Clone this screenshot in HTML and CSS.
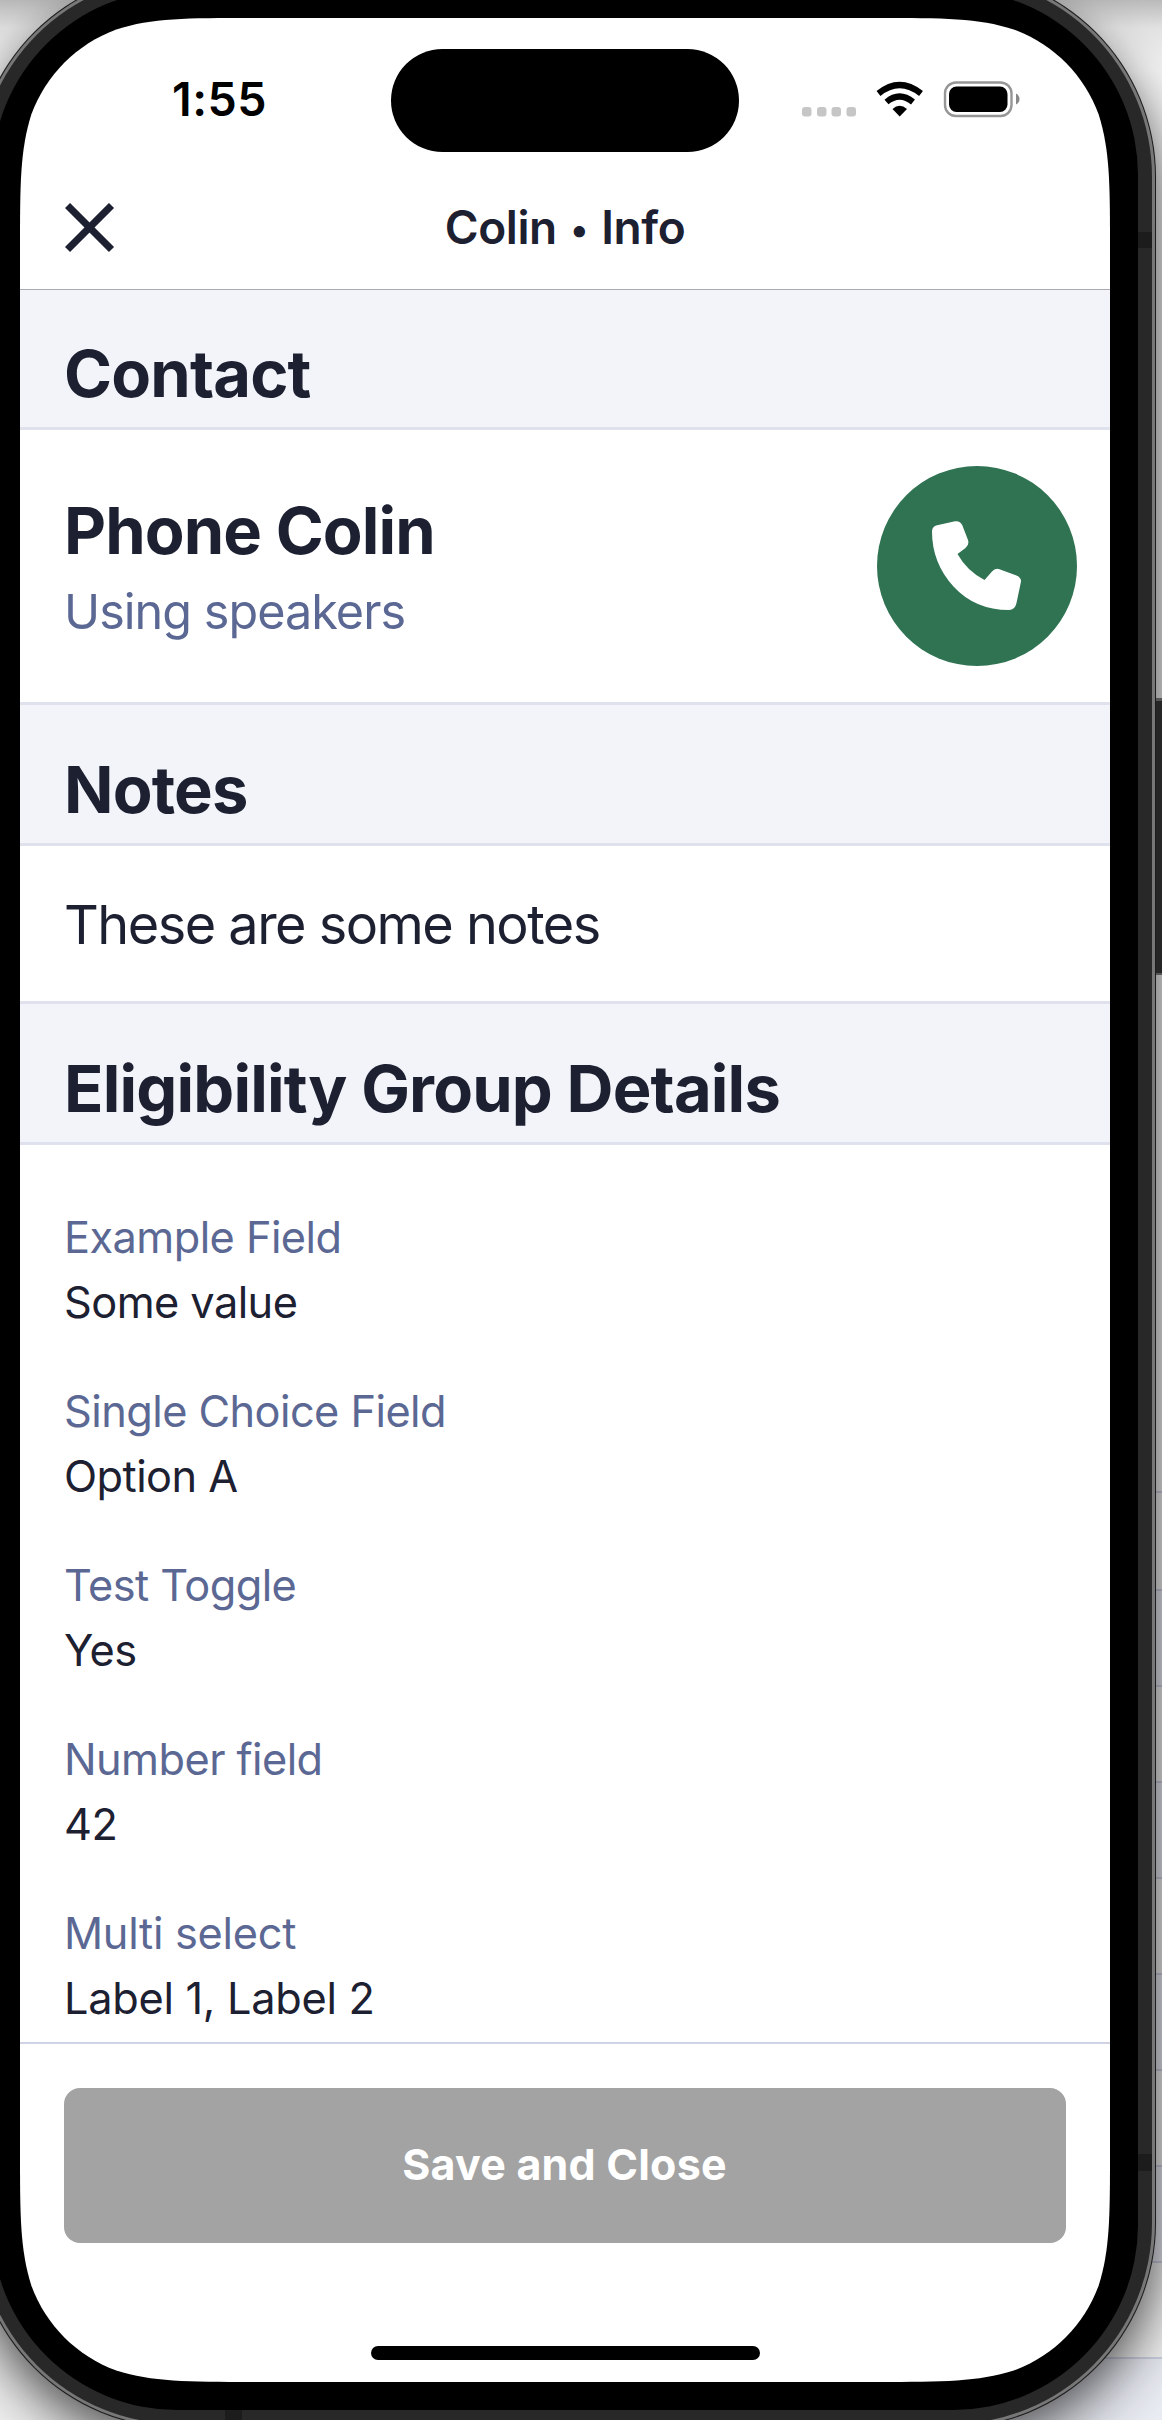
FILE: index.html
```html
<!DOCTYPE html>
<html lang="en">
<head>
<meta charset="utf-8">
<title>Colin • Info</title>
<link rel="stylesheet" href="styles.css">
</head>
<body>
<svg class="device" width="1162" height="2420" viewBox="0 0 1162 2420" aria-hidden="true">
  <defs>
    <linearGradient id="topShade" x1="0" y1="0" x2="0" y2="1">
      <stop offset="0" stop-color="#000" stop-opacity=".24"/>
      <stop offset=".4" stop-color="#000" stop-opacity=".07"/>
      <stop offset="1" stop-color="#000" stop-opacity="0"/>
    </linearGradient>
    <filter id="blur" x="-20%" y="-20%" width="140%" height="140%"><feGaussianBlur stdDeviation="34"/></filter>
    <filter id="blurNear" x="-20%" y="-20%" width="140%" height="140%"><feGaussianBlur stdDeviation="16"/></filter>
  </defs>
  <rect width="1162" height="2420" fill="#f4f4f4"/>
  <g class="sheet">
    <path d="M1130 1590h32v96h-32zM1130 1782h32v96h-32zM1130 1974h32v96h-32zM1130 2166h32v96h-32zM1000 2358h162v62h-162z" fill="#eceef6"/>
    <path d="M1130 1492h32M1130 1590h32M1130 1686h32M1130 1782h32M1130 1878h32M1130 1974h32M1130 2070h32M1130 2166h32M1130 2262h32M1060 2358h102" stroke="#cfd2e4" stroke-width="2"/>
  </g>
  <rect width="1162" height="70" fill="url(#topShade)"/>
  <rect x="-26" y="10" width="1182" height="2436" rx="198" fill="#000" opacity=".56" filter="url(#blur)"/>
  <rect x="-26" y="-10" width="1182" height="2446" rx="200" fill="#000" opacity=".24" filter="url(#blurNear)"/>
  <path d="M1154 698h8v276h-8z" fill="#262626"/>
  <path d="M1154 698h8v3h-8zM1154 973h8v2h-8z" fill="#555"/>
  <rect x="-26" y="-28" width="1182" height="2456" rx="205" fill="#1c1c1c"/>
  <rect x="-25" y="-27" width="1180" height="2454" rx="204" fill="#777"/>
  <rect x="-22" y="-24" width="1174" height="2448" rx="201" fill="#282828"/>
  <path d="M1138 232h14v16h-14zM1138 2154h14v17h-14zM225 2410h17v10h-17z" fill="#1c1c1c"/>
  <rect x="-8" y="-10" width="1146" height="2420" rx="185" fill="#000"/>
  <path fill="#fff" transform="translate(20 18)" d="M233 0H857C924 0 957.600 0 993.700 11.400C1033.100 25.800 1064.200 56.900 1078.600 96.300C1090 132.400 1090 166 1090 233V2131C1090 2198 1090 2231.600 1078.600 2267.700C1064.200 2307.100 1033.100 2338.200 993.700 2352.600C957.600 2364 924 2364 857 2364H233C166 2364 132.400 2364 96.300 2352.600C56.900 2338.200 25.800 2307.100 11.400 2267.700C0 2231.600 0 2198 0 2131V233C0 166 0 132.400 11.400 96.300C25.800 56.900 56.900 25.800 96.300 11.400C132.400 0 166 0 233 0Z"/>
</svg>
<main class="screen">
  <header class="status">
    <time class="clock">1:55</time>
    <div class="island"></div>
    <svg class="indicators" width="220" height="40" viewBox="0 0 220 40" aria-hidden="true">
      <g fill="#c6c6c6"><rect x="0" y="27" width="9.500" height="9.500" rx="3"/><rect x="15" y="27" width="9.500" height="9.500" rx="3"/><rect x="29.500" y="27" width="9.500" height="9.500" rx="3"/><rect x="44.500" y="27" width="9.500" height="9.500" rx="3"/></g>
      <g fill="none" stroke="#000"><path d="M76.500 13.500Q97.500-3.500 119 13.500" stroke-width="6.200"/><path d="M84.500 22Q97.500 11 111 22" stroke-width="6.200"/></g>
      <path d="M90.500 29Q97.500 22.500 105 29L97.700 36.500Z"/>
      <rect x="143" y="2.500" width="66.500" height="33.500" rx="11" fill="none" stroke="#969696" stroke-width="2.400"/>
      <rect x="147" y="6.500" width="58.500" height="25.500" rx="7.500"/>
      <path d="M214 13.500Q217.500 15.500 217.500 19T214 24.500Z" fill="#888"/>
    </svg>
  </header>
  <nav class="bar">
    <svg class="close" width="50" height="50" viewBox="0 0 50 50" aria-label="Close"><path d="M2.500 2.500L46.500 46.500M46.500 2.500L2.500 46.500" stroke="#1c2031" stroke-width="7.200"/></svg>
    <h1 class="title">Colin <span class="dot">•</span> Info</h1>
  </nav>
  <h2 class="band band-first">Contact</h2>
  <section class="contact">
    <div class="who">
      <h3 class="name">Phone Colin</h3>
      <p class="via">Using speakers</p>
    </div>
    <button class="call" aria-label="Call">
      <svg width="90" height="90" viewBox="0 0 90 90"><path fill="#fff" d="M4 4.500L23 .3Q28 -.5 30.200 4L36 19Q37.500 24 33.500 27L25.500 33Q35 50 52.500 59L60 50.500Q63 46.800 67.500 48.200L84.500 54.500Q90 57 88.800 61.500L84.500 82Q83 89 77 89Q43 89 21.500 65.500Q0 42 0 10.500Q0 6 4 4.500Z"/></svg>
    </button>
  </section>
  <h2 class="band">Notes</h2>
  <p class="note">These are some notes</p>
  <h2 class="band">Eligibility Group Details</h2>
  <dl class="fields">
    <div class="field"><dt>Example Field</dt><dd>Some value</dd></div>
    <div class="field"><dt>Single Choice Field</dt><dd>Option A</dd></div>
    <div class="field"><dt>Test Toggle</dt><dd>Yes</dd></div>
    <div class="field"><dt>Number field</dt><dd>42</dd></div>
    <div class="field"><dt>Multi select</dt><dd>Label 1, Label 2</dd></div>
  </dl>
  <footer class="actions">
    <button class="save">Save and Close</button>
    <div class="home"></div>
  </footer>
</main>
</body>
</html>
```
FILE: styles.css
```css
* { box-sizing: border-box; margin: 0; padding: 0; }
body {
  width: 1162px;
  height: 2420px;
  overflow: hidden;
  position: relative;
  font-family: Inter, "Liberation Sans", sans-serif;
  color: #1c2031;
}
.device { position: absolute; left: 0; top: 0; z-index: -1; }
.screen {
  width: 1090px;
  height: 2364px;
  margin: 18px 0 0 20px;
  display: flex;
  flex-direction: column;
}
.status {
  height: 155px;
  flex: none;
  display: grid;
  grid-template-columns: 371px 348px 371px;
  padding-top: 31px;
}
.clock {
  font-size: 46.500px;
  line-height: 101px;
  font-weight: 600;
  color: #000;
  padding-left: 152px;
  letter-spacing: .5px;
}
.island { height: 103px; border-radius: 52px; background: #000; }
.indicators { margin: 31px 0 0 63px; }
.bar {
  height: 117px;
  flex: none;
  border-bottom: 1px solid #a9aab4;
  display: grid;
  grid-template-columns: 200px 690px 200px;
  padding-top: 6px;
}
.close { margin: 24px 0 0 45px; }
.title {
  text-align: center;
  font-size: 46px;
  line-height: 97px;
  font-weight: 600;
  letter-spacing: -.400px;
}
.dot {
  display: inline-block;
  width: 22px;
  font-size: 36px;
  line-height: 40px;
  text-align: center;
  vertical-align: 2px;
}
.band {
  height: 141px;
  flex: none;
  background: #f3f4f9;
  border-bottom: 3px solid #dfe1ec;
  padding: 46px 0 0 44px;
  font-size: 65px;
  line-height: 78px;
  font-weight: 700;
  letter-spacing: -.820px;
}
.band-first { height: 140px; padding-top: 45px; }
.contact {
  height: 275px;
  flex: none;
  border-bottom: 3px solid #dfe1ec;
  display: flex;
  justify-content: space-between;
  padding: 36px 33px 0 44px;
}
.who { padding-top: 26px; }
.name { font-size: 65px; line-height: 78px; font-weight: 700; letter-spacing: -.900px; }
.via { font-size: 48.500px; line-height: 60px; margin-top: 12px; color: #5c6894; letter-spacing: -.950px; }
.call {
  width: 200px;
  height: 200px;
  border: 0;
  border-radius: 50%;
  background: #2f7352;
  display: flex;
  align-items: center;
  justify-content: center;
}
.note {
  height: 158px;
  flex: none;
  border-bottom: 3px solid #dfe1ec;
  padding: 46px 0 0 44px;
  font-size: 54px;
  line-height: 66px;
  letter-spacing: -1.520px;
}
.fields { height: 897px; flex: none; padding: 60px 0 0 44px; }
.field { height: 174px; font-size: 43.300px; line-height: 65px; letter-spacing: -.550px; }
.field:last-child { height: 130px; letter-spacing: -.280px; }
.field dt { color: #5c6894; }
.actions {
  height: 340px;
  flex: none;
  border-top: 2px solid #d0d3e4;
  padding: 44px 44px 0;
}
.save {
  display: block;
  width: 1002px;
  height: 155px;
  border: 0;
  border-radius: 16px;
  background: #a3a3a3;
  color: #fff;
  font: 700 43px/52px Inter, "Liberation Sans", sans-serif;
  letter-spacing: .200px;
  padding: 0 1px 3px 0;
}
.home { width: 389px; height: 14px; border-radius: 7px; background: #000; margin: 103px 0 0 307px; }
```
